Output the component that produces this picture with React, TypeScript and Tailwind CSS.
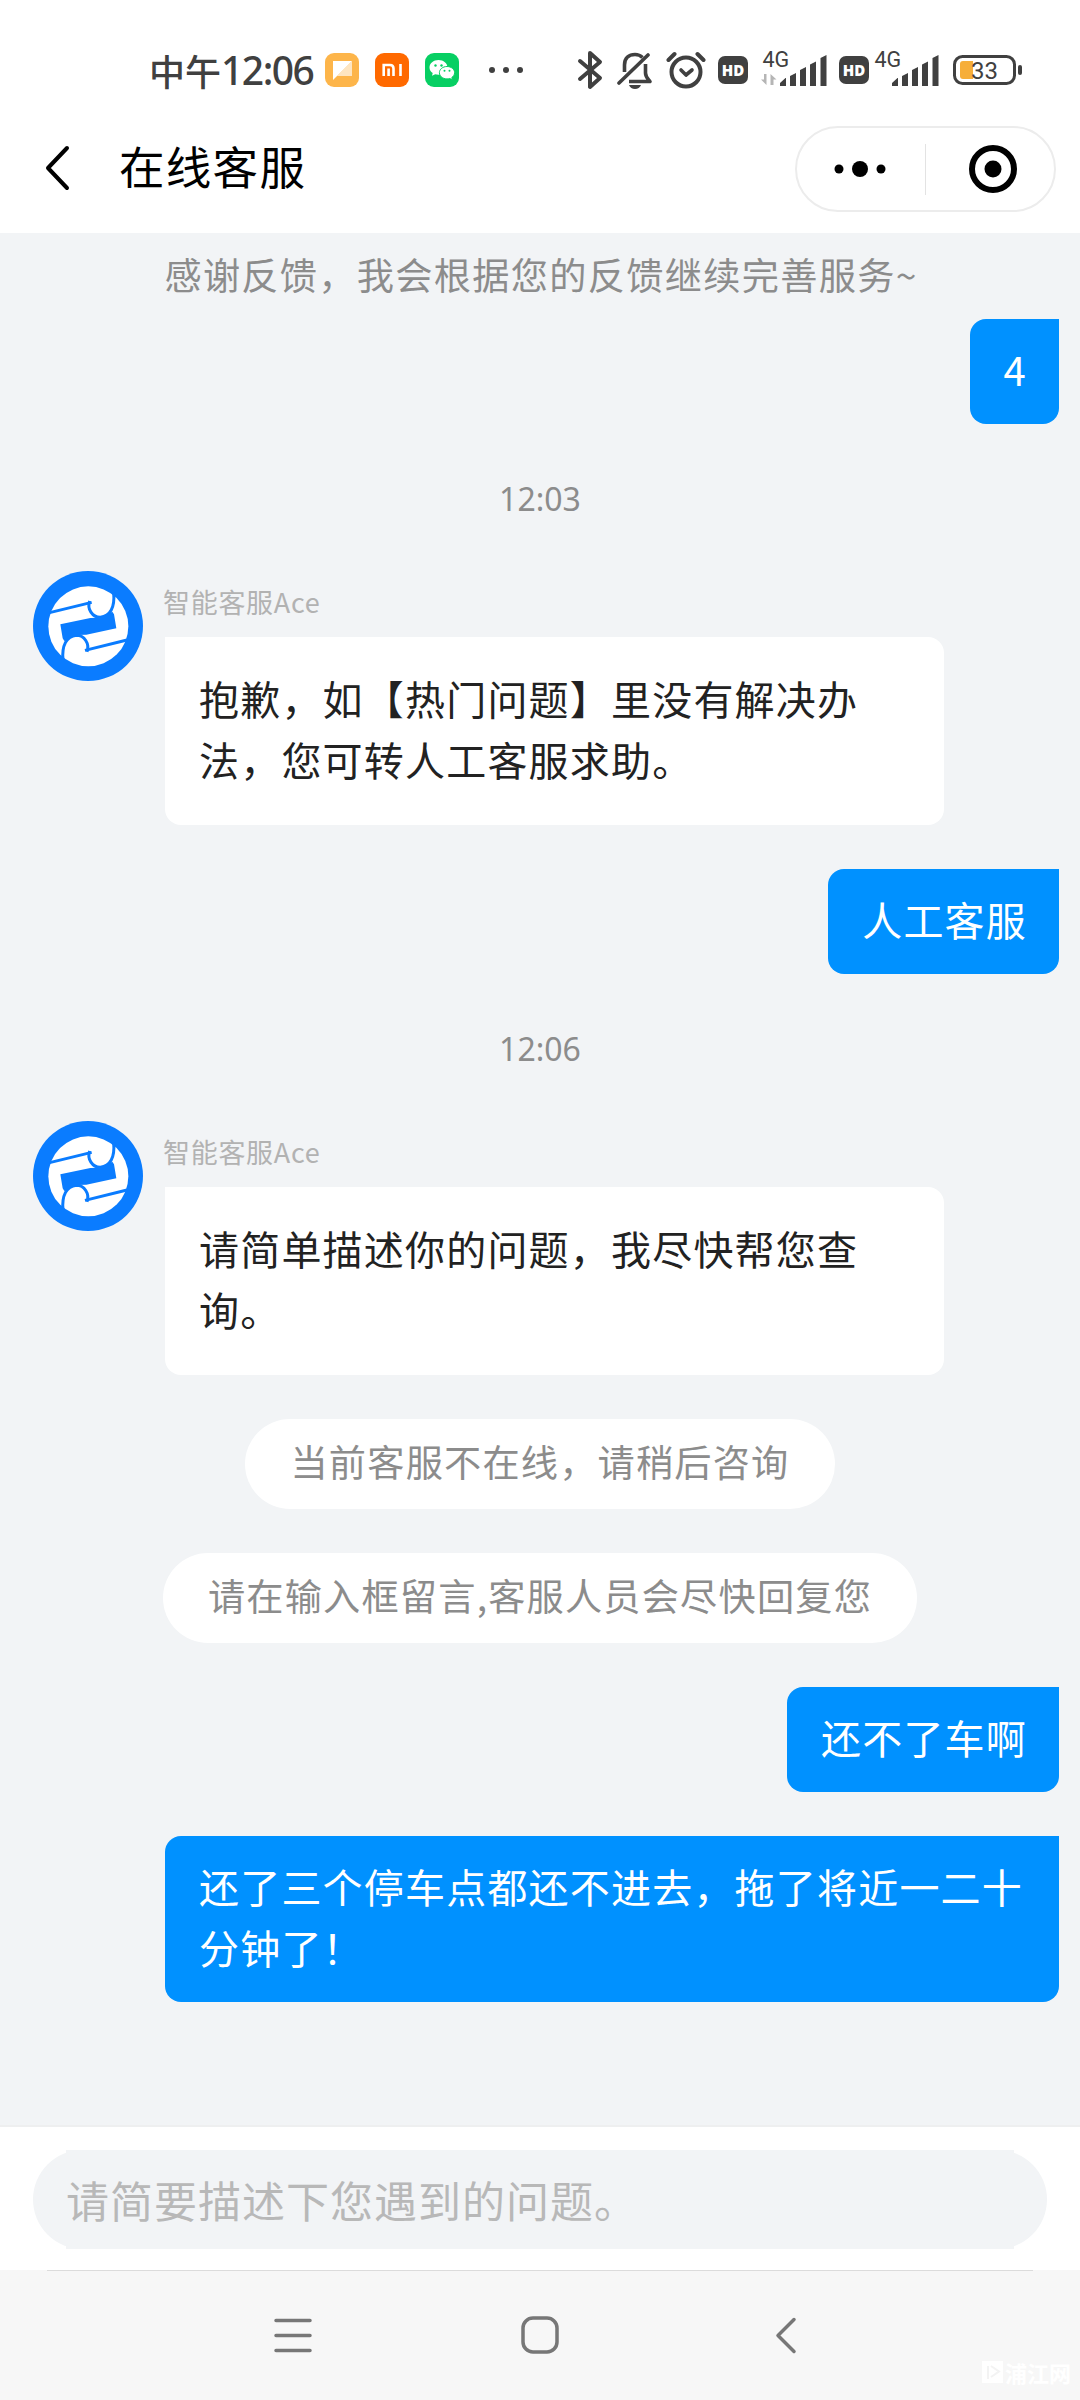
import type { ReactNode } from 'react';

interface Message {
  id: number;
  kind: 'notice' | 'pill' | 'time' | 'user' | 'agent';
  text: string;
}

const AGENT_NAME = '智能客服Ace';

const messages: Message[] = [
  { id: 1, kind: 'notice', text: '感谢反馈，我会根据您的反馈继续完善服务~' },
  { id: 2, kind: 'user', text: '4' },
  { id: 3, kind: 'time', text: '12:03' },
  { id: 4, kind: 'agent', text: '抱歉，如【热门问题】里没有解决办法，您可转人工客服求助。' },
  { id: 5, kind: 'user', text: '人工客服' },
  { id: 6, kind: 'time', text: '12:06' },
  { id: 7, kind: 'agent', text: '请简单描述你的问题，我尽快帮您查询。' },
  { id: 8, kind: 'pill', text: '当前客服不在线，请稍后咨询' },
  { id: 9, kind: 'pill', text: '请在输入框留言,客服人员会尽快回复您' },
  { id: 10, kind: 'user', text: '还不了车啊' },
  { id: 11, kind: 'user', text: '还了三个停车点都还不进去，拖了将近一二十分钟了！' },
];

function BluetoothIcon() {
  return (
    <svg className="h-[40px] w-[26px]" viewBox="0 0 26 40" fill="none" stroke="#404040" strokeWidth="4" strokeLinecap="round" strokeLinejoin="round">
      <path d="M3 11l20 17-10 9V3l10 9L3 29" />
    </svg>
  );
}

function MutedBellIcon() {
  return (
    <svg className="h-[40px] w-[36px]" viewBox="0 0 36 40" fill="none" stroke="#404040" strokeWidth="3.6">
      <path d="M7.500 22V15C7.500 8 12 4.500 18 4.500c3 0 5.500 1 7.500 3" />
      <path d="M2 33L31 5" strokeLinecap="round" />
      <path d="M28.500 14v9c0 4 2.500 6 4.500 8.500H12" strokeLinejoin="round" />
      <path d="M12 35h12c-1 2.500-3.200 4-6 4s-5-1.500-6-4z" fill="#404040" stroke="none" />
    </svg>
  );
}

function AlarmIcon() {
  return (
    <svg className="h-[40px] w-[40px]" viewBox="0 0 40 40" fill="none" stroke="#404040" strokeWidth="4" strokeLinecap="round">
      <circle cx="20" cy="22" r="14.500" />
      <path d="M15 20l5 5 6-5" strokeWidth="3.600" strokeLinejoin="round" />
      <path d="M2.500 10l6-6M37.500 10l-6-6" />
    </svg>
  );
}

function HdBadge() {
  return (
    <div className="flex h-[28px] w-[30px] items-center justify-center rounded-[7px] bg-[#404040] font-['Open_Sans','Noto_Sans_CJK_SC',sans-serif] text-[15px] font-extrabold text-white">
      HD
    </div>
  );
}

function SignalIcon({ active }: { active?: boolean }) {
  return (
    <svg className="h-[56px] w-[70px]" viewBox="-2 -8 70 56" fill="#404040">
      <text x="1.500" y="17" fontSize="21.500" fontFamily="Roboto, sans-serif">4G</text>
      {active && <path d="M5.500 24v11L0 29.500h3V24zM9.500 35V24l6 5.500h-3V35z" fill="#b5b5b5" />}
      <path d="M19 33l5.500-5H25v8h-6zM29 26l6-3v13h-6zM39 20l6-3v19h-6zM49 14.500l6-3V36h-6zM59.500 8l6-3v31h-6z" />
    </svg>
  );
}

function BatteryIcon() {
  return (
    <svg className="h-[40px] w-[70px]" viewBox="0 0 70 40">
      <rect x="1.500" y="6.500" width="60" height="27" rx="8" fill="none" stroke="#404040" strokeWidth="3" />
      <path d="M10 11h10v18H10a3 3 0 01-3-3V14a3 3 0 013-3z" fill="#f6ae3a" />
      <rect x="65" y="15" width="4" height="10" rx="2" fill="#404040" />
      <text x="18" y="28.500" fontSize="24" fill="#404040" fontFamily="Roboto, sans-serif">33</text>
    </svg>
  );
}

function NotificationIcons() {
  return (
    <div className="flex items-center gap-4">
      <svg className="h-[34px] w-[34px]" viewBox="0 0 34 34">
        <rect width="34" height="34" rx="9" fill="#fdb54a" />
        <path d="M8 8h19L8 27z" fill="#fff" />
        <path d="M27 8v15H12z" fill="#fff" fillOpacity=".65" />
      </svg>
      <svg className="h-[34px] w-[34px]" viewBox="0 0 34 34">
        <rect width="34" height="34" rx="9" fill="#ff6900" />
        <path d="M8.700 23V12h6.300q3.500 0 3.500 3.500V23M13.600 15.500V23M25.500 11v12" fill="none" stroke="#fff" strokeWidth="2.600" />
      </svg>
      <svg className="h-[34px] w-[34px]" viewBox="0 0 34 34">
        <rect width="34" height="34" rx="9" fill="#07cf63" />
        <path d="M13.500 7C8.500 7 4.500 10.300 4.500 14.500c0 2.300 1.300 4.300 3.200 5.600L7 22.800l3.200-1.500c1 .3 2.100.5 3.300.5 5 0 9-3.200 9-7.300S18.500 7 13.500 7z" fill="#fff" />
        <path d="M22 13.500c-4.300 0-7.600 2.800-7.600 6.200s3.300 6.200 7.600 6.200c1 0 1.900-.1 2.700-.4l2.700 1.300-.6-2.300c1.700-1.200 2.800-2.900 2.800-4.800 0-3.400-3.300-6.200-7.600-6.200z" fill="#fff" stroke="#07cf63" />
        <g fill="#07cf63">
          <circle cx="10.500" cy="12.500" r="1.200" />
          <circle cx="16.500" cy="12.500" r="1.200" />
          <circle cx="19.500" cy="17.800" r="1" />
          <circle cx="24.500" cy="17.800" r="1" />
        </g>
      </svg>
      <svg className="ml-[13px] h-[8px] w-[36px]" viewBox="0 0 36 8" fill="#404040">
        <circle cx="4" cy="4" r="3" />
        <circle cx="18" cy="4" r="3" />
        <circle cx="32" cy="4" r="3" />
      </svg>
    </div>
  );
}

function StatusBar() {
  return (
    <div className="flex h-[140px] items-center pr-[57px] pl-[149px] text-[#404040]">
      <div className="flex w-[176px] items-center">
        <span className="text-[36px] leading-[48px] font-medium">中午</span>
        <span className="font-['Noto_Sans',sans-serif] text-[39px] leading-[48px] font-medium tracking-[-1.5px]">12:06</span>
      </div>
      <NotificationIcons />
      <div className="ml-auto flex items-center">
        <BluetoothIcon />
        <div className="ml-[14px]"><MutedBellIcon /></div>
        <div className="ml-[13px]"><AlarmIcon /></div>
        <div className="ml-[12px]"><HdBadge /></div>
        <div className="ml-[11px]"><SignalIcon active /></div>
        <div className="ml-[10px]"><HdBadge /></div>
        <div className="ml-[2px]"><SignalIcon /></div>
        <div className="ml-[12px]"><BatteryIcon /></div>
      </div>
    </div>
  );
}

function TitleBar() {
  return (
    <header className="flex h-[93px] items-start pr-[24px] pl-[44px]">
      <svg className="mt-[5px] h-[46px] w-[28px]" viewBox="0 0 28 46" fill="none" stroke="#000" strokeWidth="4" strokeLinecap="round" strokeLinejoin="round">
        <path d="M23 3L4 23l19 20" />
      </svg>
      <h1 className="mt-[-9px] ml-[47px] text-[45.5px] leading-[68px] tracking-[1.3px] text-black">在线客服</h1>
      <div className="mt-[-14px] ml-auto flex h-[86px] w-[261px] items-center rounded-full border-2 border-[#ececec]">
        <svg className="ml-[36px] h-[20px] w-[54px]" viewBox="0 0 54 20">
          <circle cx="6" cy="10" r="4.500" />
          <circle cx="27" cy="10" r="8" />
          <circle cx="48" cy="10" r="4.500" />
        </svg>
        <div className="ml-[38px] h-[51px] w-px bg-[#e3e3e3]" />
        <svg className="ml-[42px] h-[50px] w-[50px]" viewBox="0 0 50 50">
          <circle cx="25" cy="25" r="21" fill="none" stroke="#000" strokeWidth="6" />
          <circle cx="25" cy="25" r="8.500" />
        </svg>
      </div>
    </header>
  );
}

function AgentAvatar() {
  // Half of the emblem; the other half is the same shape turned by 180°
  const half = (
    <g fill="none" stroke="#0a7cff" strokeWidth="9">
      <path d="M50 125L176 94" />
      <path d="M170 90A34 36 0 0 0 202 139C232 136 246 108 242 66" />
    </g>
  );
  return (
    <svg className="h-[110px] w-[110px] shrink-0" viewBox="0 0 330 330">
      <circle cx="165" cy="165" r="165" fill="#0a7cff" />
      <circle cx="166" cy="166" r="120" fill="#fff" />
      {half}
      <g transform="rotate(180 166 166)">{half}</g>
      <path d="M82 160L172 141L202 140L238 122L243 130L250 172L160 191L130 192L94 210L89 202Z" fill="#0a7cff" />
    </svg>
  );
}

function AgentMessage({ children }: { children: ReactNode }) {
  return (
    <div className="flex gap-[22px] pl-[33px]">
      <AgentAvatar />
      <div className="w-[779px]">
        <div className="ml-[-2px] h-[66px] pt-[11px] text-[27px] leading-[40px] tracking-[0.7px] text-[#b2b2b2]">{AGENT_NAME}</div>
        <div className="rounded-2xl rounded-tl-none bg-white pt-[31px] pr-[32px] pb-[35px] pl-[34px] text-[40px] leading-[61px] tracking-[1.2px] text-[#222]">
          {children}
        </div>
      </div>
    </div>
  );
}

function UserMessage({ children }: { children: ReactNode }) {
  return (
    <div className="flex justify-end pr-[21px] pl-[165px]">
      <div className="rounded-2xl rounded-tr-none bg-[#0091ff] pt-[20px] pr-[32px] pb-[24px] pl-[34px] text-[40px] leading-[61px] tracking-[1.2px] text-white">
        {children}
      </div>
    </div>
  );
}

function ChatRow({ message }: { message: Message }) {
  switch (message.kind) {
    case 'notice':
      return (
        <div className="mt-[-2px] mb-[-20px] pl-[2px] text-center text-[37.2px] leading-[42px] tracking-[1.3px] text-[#8c8c8c]">
          {message.text}
        </div>
      );
    case 'pill':
      return (
        <div className="flex justify-center">
          <div className="h-[90px] rounded-full bg-white px-[45px] text-[37.2px] leading-[85px] tracking-[1.2px] text-[#8c8c8c]">
            {message.text}
          </div>
        </div>
      );
    case 'time':
      return (
        <div className="mt-[9px] mb-[6px] text-center font-['Noto_Sans',sans-serif] text-[32px] leading-[44px] text-[#8c8c8c]">
          {message.text}
        </div>
      );
    case 'agent':
      return <AgentMessage>{message.text}</AgentMessage>;
    case 'user':
      return <UserMessage>{message.text}</UserMessage>;
  }
}

function InputBar() {
  return (
    <div className="h-[145px] border-t-2 border-[#eeeff0] bg-white px-[33px] pt-[23px]">
      <div className="h-[99px] rounded-full bg-[#f2f4f6] px-[33px]">
        <div className="h-full bg-[#f2f4f6] text-[43px] leading-[99px] tracking-[1px] text-[#b8b8b8]">
          请简要描述下您遇到的问题。
        </div>
      </div>
    </div>
  );
}

function NavigationBar() {
  return (
    <nav className="relative h-[130px] bg-[#f7f7f7]">
      <div className="mx-[47px] h-px bg-[#dcdcdc]" />
      <div className="mt-[44px] flex justify-center gap-[207px]">
        <svg className="h-[42px] w-[40px]" viewBox="0 0 40 42" stroke="#777" strokeWidth="3.500" strokeLinecap="round">
          <path d="M3 5.500h34M3 20.500h34M3 35.500h34" />
        </svg>
        <svg className="h-[42px] w-[40px]" viewBox="0 0 40 42" fill="none" stroke="#777" strokeWidth="3.500">
          <rect x="3" y="3" width="34" height="34" rx="10" />
        </svg>
        <svg className="h-[42px] w-[40px]" viewBox="0 0 40 42" fill="none" stroke="#777" strokeWidth="3.500" strokeLinecap="round" strokeLinejoin="round">
          <path d="M27 4.500L11 20.500l16 16" />
        </svg>
      </div>
      <div className="absolute right-[9px] bottom-[17px] flex items-center gap-[2px] text-white">
        <svg className="h-[22px] w-[21px]" viewBox="0 0 21 22">
          <path d="M0 0h21v22H0z" fill="#fff" />
          <path d="M6 5v13M9 5l8 5.500-8 5.500" fill="none" stroke="#f3f3f3" strokeWidth="2" />
        </svg>
        <span className="text-[22px] leading-[22px] font-bold">浦江网</span>
      </div>
    </nav>
  );
}

export default function App() {
  return (
    <div className="flex h-[2400px] w-[1080px] flex-col overflow-hidden bg-white font-['Noto_Sans_CJK_SC',sans-serif]">
      <StatusBar />
      <TitleBar />
      <main className="flex flex-1 flex-col gap-[44px] bg-[#f2f4f6] pt-[22px]">
        {messages.map((message) => (
          <ChatRow key={message.id} message={message} />
        ))}
      </main>
      <InputBar />
      <NavigationBar />
    </div>
  );
}
